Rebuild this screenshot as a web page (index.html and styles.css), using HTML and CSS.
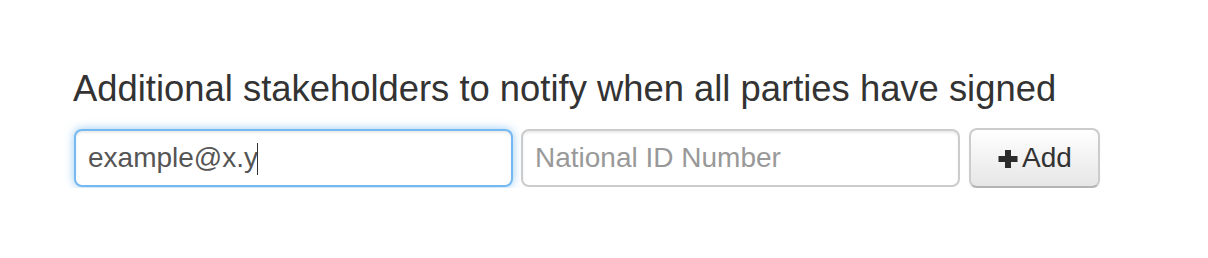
FILE: index.html
```html
<!DOCTYPE html>
<html lang="en">
  <head>
    <meta charset="UTF-8" />
    <title>Stakeholders</title>
    <link rel="stylesheet" href="styles.css">
  </head>
  <body>
    <div class="notify">
      <label class="notify-label" for="email">Additional stakeholders to notify when all parties have signed</label>
      <div class="notify-row">
        <div class="field-wrap">
          <input id="email" class="field focused" type="text" value="example@x.y">
          <span class="caret"></span>
        </div>
        <input class="field" type="text" placeholder="National ID Number">
        <button class="btn-add" type="button">
          <svg class="icon-plus" width="22" height="20" viewBox="0 0 22 20">
            <path d="M11 1v18M1.5 10h19" stroke="#2b2b2b" stroke-width="6" fill="none"/>
          </svg>Add
        </button>
      </div>
    </div>
  </body>
</html>
```

FILE: styles.css
```css
body {
  margin: 0;
  background-color: #fff;
  font-family: "Liberation Sans", Arial, Helvetica, sans-serif;
  color: #333;
}
.notify {
  padding: 67px 0 0 73px;
}
.notify-label {
  display: block;
  font-size: 36.4px;
  line-height: 44px;
  color: #333;
  margin-bottom: 17px;
}
.notify-row {
  display: flex;
  align-items: center;
}
.field-wrap {
  position: relative;
  margin-left: 1px;
}
.field {
  box-sizing: border-box;
  width: 439px;
  height: 58px;
  padding: 0 12px;
  margin-right: 8px;
  font-family: inherit;
  font-size: 28px;
  color: #555;
  background-color: #fff;
  border: 2px solid #ccc;
  border-radius: 8px;
  box-shadow: inset 0 2px 2px rgba(0, 0, 0, 0.075);
  outline: none;
}
.field::placeholder {
  color: #999;
}
.field.focused {
  border-color: rgba(82, 168, 236, 0.8);
  box-shadow: inset 0 2px 2px rgba(0, 0, 0, 0.075), 0 0 10px rgba(82, 168, 236, 0.6);
}
.caret {
  position: absolute;
  left: 183px;
  top: 14px;
  width: 1px;
  height: 32px;
  background-color: #333;
}
.btn-add {
  box-sizing: border-box;
  width: 131px;
  height: 60px;
  margin-left: 1px;
  display: flex;
  align-items: center;
  justify-content: center;
  gap: 3px;
  padding: 0;
  font-family: inherit;
  font-size: 28px;
  color: #333;
  background-image: linear-gradient(to bottom, #fff, #e6e6e6);
  border: 2px solid #ccc;
  border-bottom-color: #b3b3b3;
  border-radius: 8px;
  box-shadow: inset 0 2px 0 rgba(255, 255, 255, 0.2), 0 2px 2px rgba(0, 0, 0, 0.05);
  cursor: pointer;
}
.icon-plus {
  margin-top: 1px;
}
```
